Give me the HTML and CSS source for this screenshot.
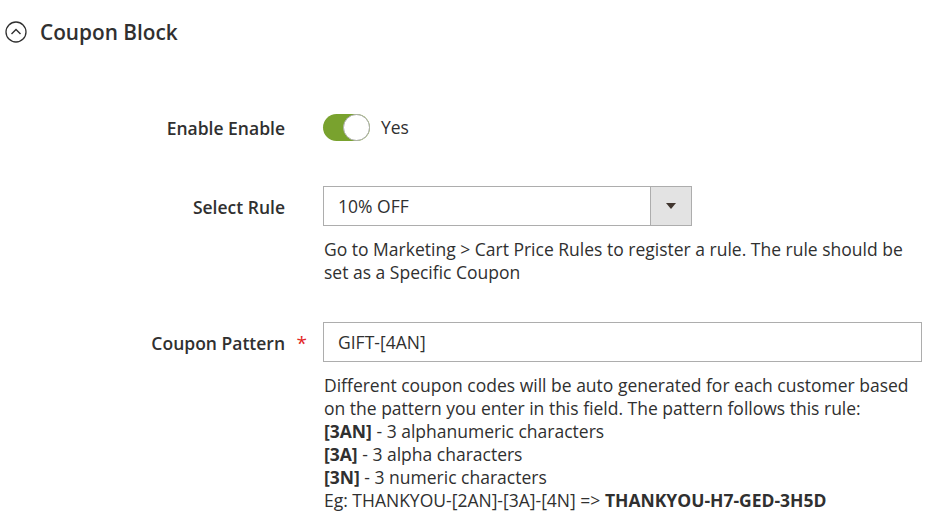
FILE: index.html
```html
<!DOCTYPE html>
<html lang="en">
<head>
  <meta charset="UTF-8">
  <title>Coupon Block</title>
  <link rel="stylesheet" href="styles.css">
</head>
<body>
  <div class="section">
    <div class="section-title">
      <svg class="collapse-icon" width="22" height="22" viewBox="0 0 22 22">
        <circle cx="11" cy="11" r="10" fill="none" stroke="#303030" stroke-width="1.3"/>
        <path d="M6.5 13 L11 8.5 L15.5 13" fill="none" stroke="#303030" stroke-width="1.4"/>
      </svg>
      <span>Coupon Block</span>
    </div>

    <div class="fieldset">
      <div class="field">
        <label class="field-label">Enable Enable</label>
        <div class="field-control">
          <div class="switch-row">
            <span class="switch"><span class="knob"></span></span>
            <span class="switch-text">Yes</span>
          </div>
        </div>
      </div>

      <div class="field">
        <label class="field-label">Select Rule</label>
        <div class="field-control">
          <div class="select">
            <span class="select-value">10% OFF</span>
            <span class="select-btn"><span class="arrow"></span></span>
          </div>
          <div class="note">Go to Marketing &gt; Cart Price Rules to register a rule. The rule should be set as a Specific Coupon</div>
        </div>
      </div>

      <div class="field required">
        <label class="field-label">Coupon Pattern</label>
        <div class="field-control">
          <div class="input">GIFT-[4AN]</div>
          <div class="note">
            Different coupon codes will be auto generated for each customer based on the pattern you enter in this field. The pattern follows this rule:<br>
            <strong>[3AN]</strong> - 3 alphanumeric characters<br>
            <strong>[3A]</strong> - 3 alpha characters<br>
            <strong>[3N]</strong> - 3 numeric characters<br>
            Eg: THANKYOU-[2AN]-[3A]-[4N] =&gt; <strong>THANKYOU-H7-GED-3H5D</strong>
          </div>
        </div>
      </div>
    </div>
  </div>
</body>
</html>
```

FILE: styles.css
```css
body {
  margin: 0;
  padding: 0;
  background-color: #fff;
  font-family: "Open Sans", "Liberation Sans", sans-serif;
  font-size: 17.5px;
  color: #303030;
}

.section {
  width: 929px;
}

.section-title {
  display: flex;
  align-items: center;
  height: 22px;
  padding: 21px 0 0 5px;
  font-size: 20.8px;
  font-weight: 600;
  color: #303030;
}

.collapse-icon {
  margin-right: 13px;
}

.fieldset {
  padding-top: 64px;
}

.field {
  display: grid;
  grid-template-columns: 285px 599px;
  column-gap: 38px;
  margin-bottom: 38px;
}

.field-label {
  position: relative;
  display: flex;
  align-items: center;
  justify-content: flex-end;
  height: 40px;
  font-weight: 600;
  margin-top: 1px;
}

.required .field-label::after {
  content: "*";
  position: absolute;
  right: -22px;
  top: 7px;
  color: #e22626;
  font-size: 19px;
  font-weight: 400;
}

.switch-row {
  display: flex;
  align-items: center;
  height: 40px;
}

.switch {
  position: relative;
  display: inline-block;
  width: 47px;
  height: 27px;
  border-radius: 14px;
  background-color: #79a22e;
}

.knob {
  position: absolute;
  right: 0;
  top: 0;
  width: 25px;
  height: 25px;
  border-radius: 50%;
  background-color: #fff;
  border: 1px solid #adadad;
}

.switch-text {
  margin-left: 11px;
}

.select {
  display: flex;
  width: 369px;
  height: 40px;
  box-sizing: border-box;
  border: 1px solid #adadad;
}

.select-value {
  flex: 1;
  display: flex;
  align-items: center;
  padding-left: 14px;
}

.select-btn {
  display: flex;
  align-items: center;
  justify-content: center;
  width: 40px;
  background-color: #e3e3e3;
  border-left: 1px solid #adadad;
}

.arrow {
  width: 0;
  height: 0;
  border-left: 5px solid transparent;
  border-right: 5px solid transparent;
  border-top: 6px solid #41362f;
}

.input {
  display: flex;
  align-items: center;
  width: 599px;
  height: 40px;
  box-sizing: border-box;
  border: 1px solid #adadad;
  padding-left: 14px;
}

.note {
  margin-top: 12px;
  padding-left: 1px;
  line-height: 23px;
  max-width: 598px;
}

.note strong {
  font-weight: 700;
}
```
